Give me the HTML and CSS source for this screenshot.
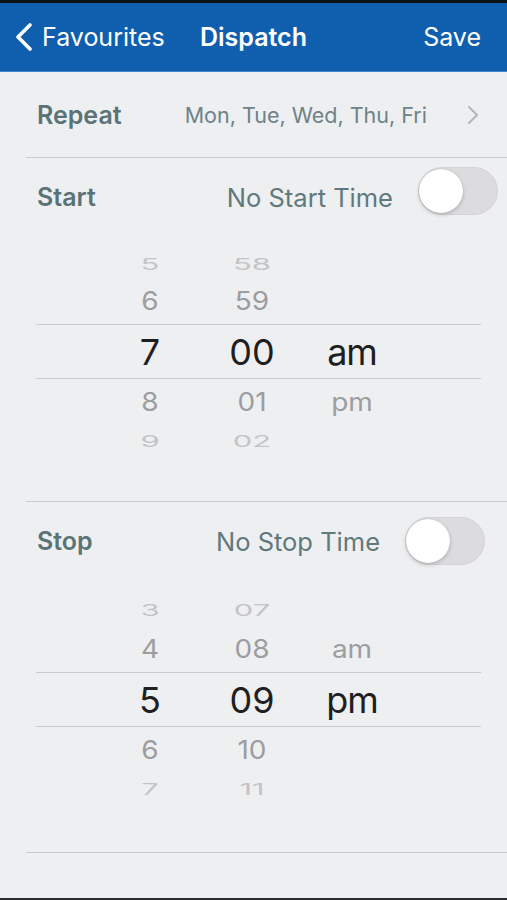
FILE: index.html
```html
<!DOCTYPE html>
<html>
<head>
<meta charset="utf-8">
<link rel="stylesheet" href="styles.css">
</head>
<body>
<div class="screen">
  <div class="status"></div>
  <header class="navbar">
    <div class="nav-left">
      <svg class="back" width="22" height="28" viewBox="0 0 22 28"><path d="M17 2 L5 14 L17 26" fill="none" stroke="#fff" stroke-width="3.6" stroke-linecap="round" stroke-linejoin="round"/></svg>
      <span>Favourites</span>
    </div>
    <div class="nav-title">Dispatch</div>
    <div class="nav-right">Save</div>
  </header>

  <main class="content">
    <div class="row repeat">
      <span class="label">Repeat</span>
      <span class="days">Mon, Tue, Wed, Thu, Fri</span>
      <svg class="chev" width="12" height="20" viewBox="0 0 12 20"><path d="M2 2 L10 10 L2 18" fill="none" stroke="#b3b5b8" stroke-width="2" stroke-linecap="round" stroke-linejoin="round"/></svg>
    </div>

    <section class="section start">
      <div class="sec-head">
        <span class="label">Start</span>
        <span class="none">No Start Time</span>
        <span class="toggle"><span class="knob"></span></span>
      </div>
      <div class="picker">
        <div class="r outer top"><span class="h">5</span><span class="m">58</span><span class="p"></span></div>
        <div class="r near"><span class="h">6</span><span class="m">59</span><span class="p"></span></div>
        <div class="r sel"><span class="h">7</span><span class="m">00</span><span class="p">am</span></div>
        <div class="r near"><span class="h">8</span><span class="m">01</span><span class="p">pm</span></div>
        <div class="r outer"><span class="h">9</span><span class="m">02</span><span class="p"></span></div>
      </div>
    </section>

    <section class="section stop">
      <div class="sec-head">
        <span class="label">Stop</span>
        <span class="none">No Stop Time</span>
        <span class="toggle"><span class="knob"></span></span>
      </div>
      <div class="picker">
        <div class="r outer top"><span class="h">3</span><span class="m">07</span><span class="p"></span></div>
        <div class="r near"><span class="h">4</span><span class="m">08</span><span class="p">am</span></div>
        <div class="r sel"><span class="h">5</span><span class="m">09</span><span class="p">pm</span></div>
        <div class="r near"><span class="h">6</span><span class="m">10</span><span class="p"></span></div>
        <div class="r outer"><span class="h">7</span><span class="m">11</span><span class="p"></span></div>
      </div>
    </section>
  </main>
  <div class="bottom"></div>
</div>
</body>
</html>
```
FILE: styles.css
```css
* { box-sizing: border-box; }
html, body { margin: 0; padding: 0; }
body {
  width: 507px;
  height: 900px;
  overflow: hidden;
  background: #eeeff1;
  font-family: "Inter", "Noto Sans", sans-serif;
}
.screen {
  display: flex;
  flex-direction: column;
  height: 900px;
}
.status { height: 3px; background: #0c0f14; }
.navbar {
  height: 69px;
  background: #0f5fae;
  border-bottom: 1px solid #3f86cf;
  display: grid;
  grid-template-columns: 1fr auto 1fr;
  align-items: center;
  color: #fff;
  font-size: 25px;
}
.nav-left {
  display: flex;
  align-items: center;
  padding-left: 13px;
  gap: 7px;
}
.nav-title { font-weight: 600; }
.nav-right { justify-self: end; padding-right: 26px; }

.content {
  flex: 1;
  margin-left: 26px;
}
.row.repeat {
  height: 86px;
  display: flex;
  align-items: center;
  padding-left: 11px;
  padding-right: 28px;
  border-bottom: 1.5px solid #c9cacd;
}
.label {
  font-weight: 600;
  font-size: 25px;
  color: #5a7377;
}
.days {
  margin-left: auto;
  font-size: 21.5px;
  color: #6d8387;
}
.chev { margin-left: 40px; }

.section {
  border-bottom: 1.5px solid #c9cacd;
  padding-bottom: 46px;
}
.stop { padding-bottom: 49px; }
.sec-head {
  height: 78px;
  display: flex;
  align-items: center;
  padding-left: 11px;
}
.start .sec-head { padding-right: 9px; }
.stop .sec-head { padding-right: 22px; }
.none {
  margin-left: auto;
  margin-right: 25px;
  font-size: 25.5px;
  color: #5f797d;
}
.toggle {
  position: relative;
  width: 80px;
  height: 48px;
  border-radius: 24px;
  background: #dcdcde;
  border: 1px solid #d4d4d6;
}
.start .toggle { margin-bottom: 13px; }
.knob {
  position: absolute;
  left: 0;
  top: 1px;
  width: 44px;
  height: 44px;
  border-radius: 50%;
  background: #fff;
  box-shadow: 0 2px 4px rgba(0,0,0,0.18), 0 0 1px rgba(0,0,0,0.2);
}

.picker {
  margin-left: 10px;
  width: 445px;
  margin-top: 12px;
}
.stop .picker { margin-top: 16px; }
.r {
  display: grid;
  grid-template-columns: 64px 100px 104px 96px;
  align-items: center;
  text-align: center;
}
.r span { display: block; }
.r.outer { height: 30px; font-size: 31px; color: #c3c4c6; }
.r.outer span { transform: translateY(-2px) scaleY(0.5); }
.stop .r.outer.top span { transform: translateY(-4px) scaleY(0.5); }
.r.near { height: 46px; font-size: 28px; color: #9c9d9f; }
.r.near span { transform: scaleY(0.92); }
.r.sel {
  height: 55px;
  font-size: 36px;
  color: #1f1f21;
  border-top: 1.5px solid #c9cacd;
  border-bottom: 1.5px solid #c9cacd;
}
.r.sel .p { letter-spacing: -1px; }
.r .h { grid-column: 2; }
.r .m { grid-column: 3; }
.r .p { grid-column: 4; }

.bottom { height: 2px; background: #2a2b2d; }
```
